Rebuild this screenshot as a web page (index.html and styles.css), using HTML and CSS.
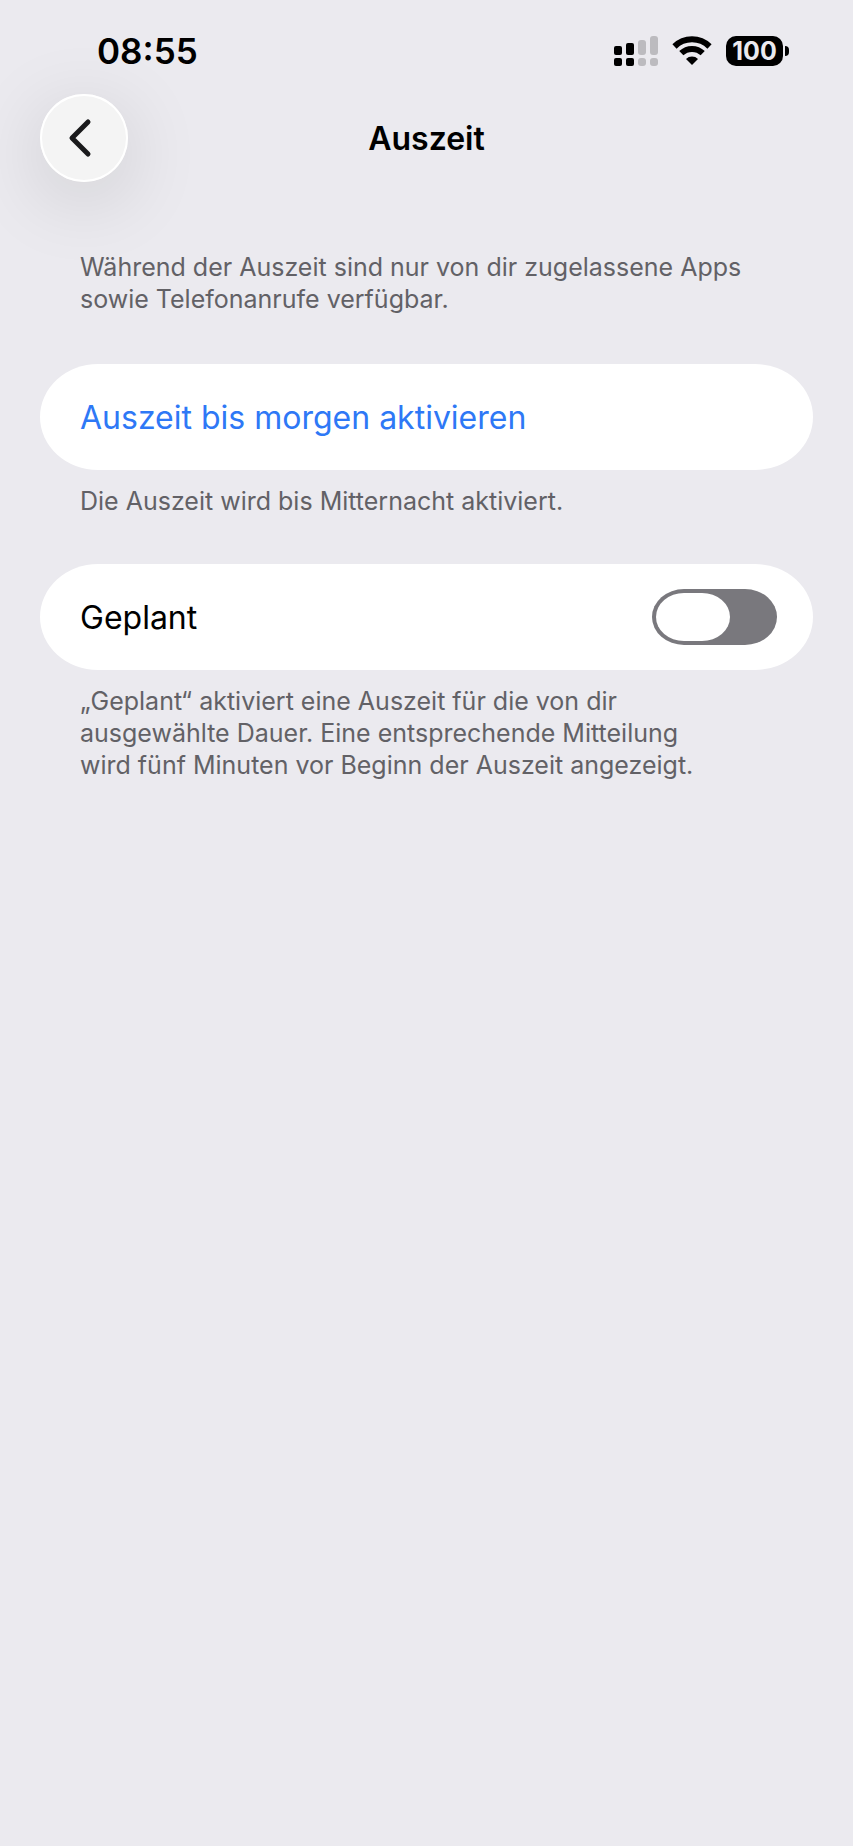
FILE: index.html
```html
<!DOCTYPE html>
<html lang="de">
<head>
  <meta charset="UTF-8" />
  <meta name="viewport" content="width=device-width, initial-scale=1.0"/>
  <title>Auszeit</title>
  <link rel="stylesheet" href="styles.css">
</head>
<body>
  <div class="status-bar">
    <time class="clock">08:55</time>
    <div class="status-icons">
      <svg class="signal" viewBox="0 0 44 30" aria-hidden="true">
        <rect x="0" y="10" width="8" height="9" rx="2"/>
        <rect x="0" y="22" width="8" height="8" rx="2"/>
        <rect x="12" y="7" width="8" height="12" rx="2"/>
        <rect x="12" y="22" width="8" height="8" rx="2"/>
        <g class="weak">
          <rect x="24" y="4" width="8" height="15" rx="3"/>
          <rect x="24" y="22" width="8" height="8" rx="3"/>
          <rect x="36" y="0" width="8" height="19" rx="3"/>
          <rect x="36" y="22" width="8" height="8" rx="3"/>
        </g>
      </svg>
      <svg class="wifi" viewBox="0 0 40 30" aria-hidden="true">
        <path class="arc" d="M2.5 10.5 A25 25 0 0 1 37.5 10.5"/>
        <path class="arc" d="M9.3 17.2 A15.5 15.5 0 0 1 30.7 17.2"/>
        <path d="M20 29 L14 23 A8.6 8.6 0 0 1 26 23 Z"/>
      </svg>
      <div class="battery">
        <span class="battery-level">100</span>
        <span class="battery-tip"></span>
      </div>
    </div>
  </div>

  <header class="nav-bar">
    <button class="back" type="button" aria-label="Zurück">
      <svg viewBox="0 0 88 88" aria-hidden="true">
        <path d="M48 28 L32 44 L48 60"/>
      </svg>
    </button>
    <h1>Auszeit</h1>
  </header>

  <main>
    <p class="note intro">Während der Auszeit sind nur von dir zugelassene Apps sowie Telefonanrufe verfügbar.</p>

    <section>
      <button class="card action" type="button">Auszeit bis morgen aktivieren</button>
      <p class="note">Die Auszeit wird bis Mitternacht aktiviert.</p>
    </section>

    <section>
      <div class="card">
        <label for="scheduled">Geplant</label>
        <input class="switch" type="checkbox" role="switch" id="scheduled" />
      </div>
      <p class="note">„Geplant“ aktiviert eine Auszeit für die von dir<br>ausgewählte Dauer. Eine entsprechende Mitteilung<br>wird fünf Minuten vor Beginn der Auszeit angezeigt.</p>
    </section>
  </main>
</body>
</html>
```
FILE: styles.css
```css
* {
  box-sizing: border-box;
}
body {
  margin: 0;
  min-height: 100vh;
  background-color: #ebeaef;
  color: #000;
  font-family: Inter, "Liberation Sans", sans-serif;
}
h1, p {
  margin: 0;
}
button, input {
  margin: 0;
  border: none;
  font: inherit;
  cursor: pointer;
}

/* status bar */
.status-bar {
  display: flex;
  justify-content: space-between;
  align-items: center;
  height: 94px;
  padding: 8px 64px 0 97px;
}
.clock {
  font-size: 35px;
  font-weight: 600;
}
.status-icons {
  display: flex;
  align-items: center;
  gap: 14px;
}
.signal {
  width: 44px;
  height: 30px;
}
.signal .weak {
  fill: #bcbbbf;
}
.wifi {
  width: 40px;
  height: 30px;
}
.wifi .arc {
  fill: none;
  stroke: #000;
  stroke-width: 6;
}
.battery {
  display: flex;
  align-items: center;
  gap: 2px;
}
.battery-level {
  width: 57px;
  border-radius: 10px;
  background-color: #000;
  color: #ebeaef;
  font-size: 25px;
  font-weight: 700;
  line-height: 30px;
  text-align: center;
}
.battery-tip {
  width: 4px;
  height: 10px;
  border-radius: 0 4px 4px 0;
  background-color: #000;
}

/* navigation */
.nav-bar {
  display: grid;
  grid-template-columns: 88px 1fr 88px;
  align-items: center;
  padding: 0 40px;
}
.back {
  width: 88px;
  height: 88px;
  padding: 0;
  border-radius: 50%;
  background-color: #f4f4f4;
  box-shadow: inset 0 0 0 2px #fff, 0 16px 80px rgba(0, 0, 0, 0.14);
}
.back svg {
  display: block;
  fill: none;
  stroke: #1a1a1c;
  stroke-width: 5;
  stroke-linecap: round;
  stroke-linejoin: round;
}
h1 {
  font-size: 32px;
  font-weight: 600;
  text-align: center;
}

/* settings */
main {
  padding: 69px 40px 40px;
}
section {
  margin-bottom: 47px;
}
.note {
  padding: 15px 40px 0;
  color: #626166;
  font-size: 25px;
  line-height: 32px;
}
.intro {
  padding-top: 0;
  margin-bottom: 49px;
}
.card {
  display: flex;
  justify-content: space-between;
  align-items: center;
  width: 100%;
  height: 106px;
  padding: 0 36px 0 40px;
  border-radius: 58px / 53px;
  background-color: #fff;
  font-size: 32px;
}
.action {
  color: #2e78f6;
  text-align: left;
}
.switch {
  appearance: none;
  display: flex;
  width: 125px;
  height: 56px;
  padding: 4px;
  border-radius: 32px / 28px;
  background-color: #79787d;
}
.switch::before {
  content: "";
  width: 74px;
  border-radius: 28px / 24px;
  background-color: #fff;
}
.switch:checked {
  justify-content: flex-end;
  background-color: #34c759;
}
```
